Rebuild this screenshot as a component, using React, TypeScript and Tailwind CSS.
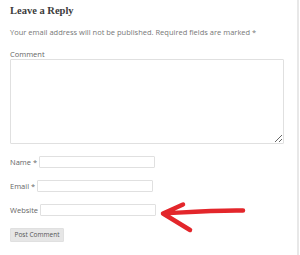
import React from 'react';

const Field = ({ label, required }: { label: string; required?: boolean }) => (
  <div className="flex items-center gap-[2px] mt-[12px] h-[12px]">
    <label className="text-[7.5px] leading-[10px] text-[#666]">
      {label}
      {required && ' *'}
    </label>
    <input
      type="text"
      className="w-[116px] h-[12px] border border-[#e0e0e0] rounded-[1px] bg-white outline-none"
    />
  </div>
);

export default function App() {
  return (
    <div className="w-[300px] h-[255px] bg-white overflow-hidden relative">
      <div className="w-[299px] h-full border-r-2 border-[#e8e8e8] pl-[10px] pt-[5px] font-['Open_Sans',sans-serif]">
        <h3 className="font-['Liberation_Serif',serif] font-bold text-[10.5px] leading-[12px] text-[#3c3c3c]">
          Leave a Reply
        </h3>
        <p className="mt-[10px] text-[7.5px] leading-[10px] text-[#777]">
          Your email address will not be published. Required fields are marked *
        </p>
        <label className="block mt-[12px] text-[7.5px] leading-[10px] text-[#666]">Comment</label>
        <textarea className="block w-[274px] h-[85px] border border-[#e0e0e0] rounded-[1px] bg-white outline-none" />

        <div className="mt-[1px]">
          <Field label="Name" required />
          <Field label="Email" required />
          <Field label="Website" />
        </div>

        <button className="mt-[12px] w-[54px] h-[14px] bg-[#e6e6e6] border border-[#e0e0e0] text-[6.5px] leading-[12px] text-[#555] rounded-[1px]">
          Post Comment
        </button>
      </div>

      {/* red annotation arrow */}
      <svg className="absolute left-[155px] top-[198px]" width="95" height="40" viewBox="0 0 95 40" fill="none">
        <path
          d="M88 12.5 C 60 12, 35 14, 8 15.5 M28 6.5 L8 15.5 L35 32"
          stroke="#e3262b"
          strokeWidth="4.5"
          strokeLinecap="round"
          strokeLinejoin="round"
        />
      </svg>
    </div>
  );
}
